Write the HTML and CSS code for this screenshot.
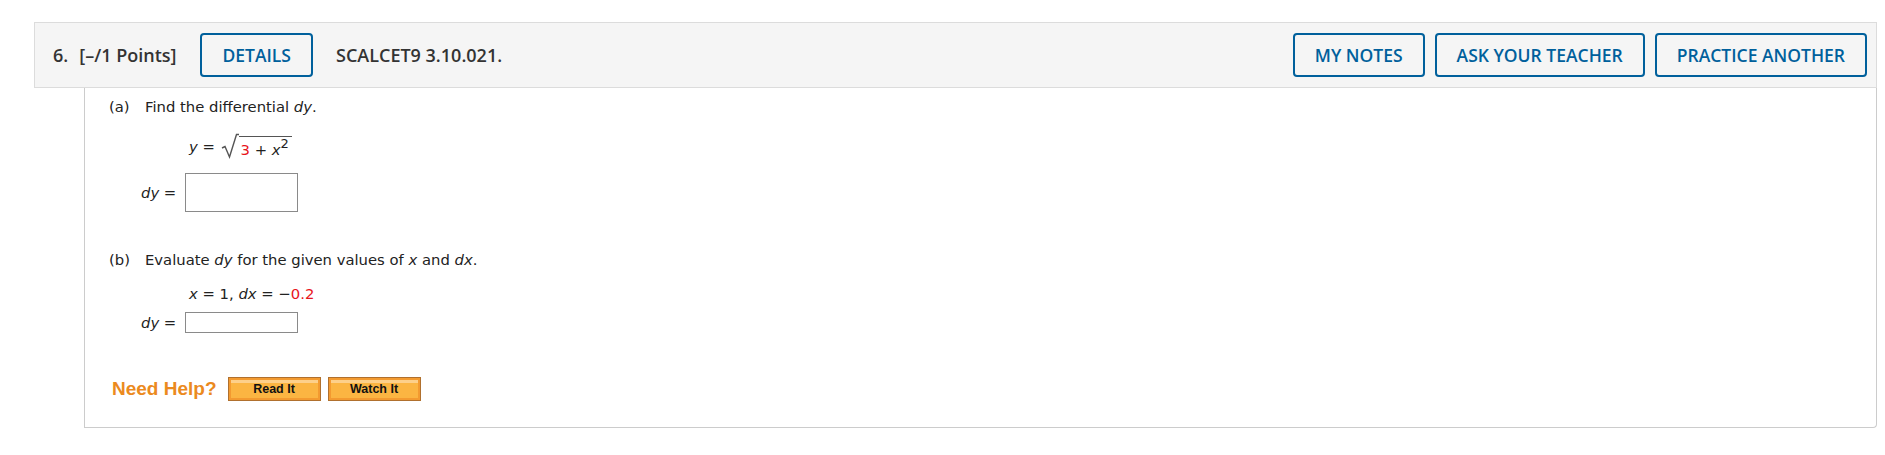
FILE: index.html
```html
<!DOCTYPE html>
<html>
<head>
<meta charset="utf-8">
<link rel="stylesheet" href="styles.css">
</head>
<body>
<div class="question">
  <div class="q-header">
    <div class="q-title">
      <span class="q-num">6.</span>
      <span class="q-points">[–/1 Points]</span>
    </div>
    <button class="hbtn">DETAILS</button>
    <span class="q-code">SCALCET9 3.10.021.</span>
    <div class="spacer"></div>
    <div class="hbtn-group">
      <button class="hbtn">MY NOTES</button>
      <button class="hbtn">ASK YOUR TEACHER</button>
      <button class="hbtn">PRACTICE ANOTHER</button>
    </div>
  </div>
  <div class="q-body">
    <div class="part part-a">
      <div class="prompt"><span class="lbl">(a)</span><span>Find the differential <i>dy</i>.</span></div>
      <div class="eq eq-a">
        <span class="eq-lhs"><i>y</i> =&nbsp;</span><span class="sqrt"><svg class="rad" width="18" height="26" viewBox="0 0 18 26"><path d="M1 15 L4 13.5 L8.5 24 L15.5 1.5 L18 1.5" fill="none" stroke="#555" stroke-width="1.4"/></svg><span class="radicand"><span class="red">3</span> + <i>x</i><sup>2</sup></span></span>
      </div>
      <div class="answer answer-a"><span class="ans-lbl"><i>dy</i> =</span><span class="box box-tall"></span></div>
    </div>
    <div class="part part-b">
      <div class="prompt"><span class="lbl">(b)</span><span>Evaluate <i>dy</i> for the given values of <i>x</i> and <i>dx</i>.</span></div>
      <div class="eq eq-b"><span><i>x</i> = 1, <i>dx</i> = −<span class="red">0.2</span></span></div>
      <div class="answer answer-b"><span class="ans-lbl"><i>dy</i> =</span><span class="box box-short"></span></div>
    </div>
    <div class="help">
      <span class="help-text">Need Help?</span>
      <button class="obtn">Read It</button>
      <button class="obtn">Watch It</button>
    </div>
  </div>
</div>
</body>
</html>
```

FILE: styles.css
```css
html, body {
  margin: 0;
  padding: 0;
  background: #fff;
}
.question {
  padding: 22px 8px 26px 34px;
}
.q-header {
  display: flex;
  align-items: center;
  height: 64px;
  background: #f5f5f5;
  border: 1px solid #dcdcdc;
  padding: 0 9px 0 18px;
  font-family: "Open Sans", sans-serif;
  color: #333;
}
.q-title {
  font-weight: 600;
  font-size: 18px;
  display: flex;
  gap: 11px;
  margin-right: 24px;
}
.q-code {
  font-weight: 600;
  font-size: 18px;
  margin-left: 23px;
  color: #333;
}
.spacer { flex: 1; }
.hbtn-group {
  display: flex;
  gap: 10px;
}
.hbtn {
  font-family: "Open Sans", sans-serif;
  font-size: 17.5px;
  font-weight: 600;
  color: #00609c;
  background: transparent;
  border: 2px solid #00609c;
  border-radius: 4px;
  height: 44px;
  padding: 0 20px;
  margin: 0;
}
.q-body {
  margin-left: 50px;
  border: 1px solid #cccccc;
  border-top: none;
  border-radius: 0 0 4px 0;
  height: 340px;
  box-sizing: border-box;
  padding: 0 0 0 24px;
  font-family: "DejaVu Sans", Verdana, sans-serif;
  font-size: 14.8px;
  color: #222;
}
.prompt {
  display: flex;
  height: 20px;
  align-items: center;
}
.lbl {
  width: 36px;
}
.red { color: #e8141c; }
.part-a { padding-top: 8px; }
.eq {
  padding-left: 80px;
  display: flex;
  align-items: center;
}
.eq-a { margin-top: 17px; height: 26px; }
.sqrt {
  display: inline-flex;
  align-items: flex-end;
}
.rad { display: block; margin-left: 1px; }
.radicand {
  border-top: 1.4px solid #555;
  padding: 3px 3px 0 2px;
  line-height: 19px;
}
.radicand sup {
  font-size: 13px;
  line-height: 0;
  vertical-align: 7px;
}
.answer {
  display: flex;
  align-items: center;
}
.ans-lbl {
  width: 76px;
  padding-left: 32px;
  box-sizing: border-box;
}
.answer-a { margin-top: 14px; }
.box {
  display: block;
  border: 1px solid #8a8a8a;
  background: #fff;
  box-sizing: border-box;
  width: 113px;
}
.box-tall { height: 39px; }
.box-short { height: 21px; }
.part-b { padding-top: 37px; }
.eq-b { margin-top: 14px; height: 20px; }
.answer-b { margin-top: 9px; }
.help {
  display: flex;
  align-items: center;
  margin-top: 44px;
  padding-left: 3px;
}
.help-text {
  font-family: "Liberation Sans", Arial, sans-serif;
  font-weight: bold;
  font-size: 19px;
  color: #eb8a1e;
  margin-right: 11px;
}
.obtn {
  font-family: "Liberation Sans", Arial, sans-serif;
  font-weight: bold;
  font-size: 12.5px;
  color: #111;
  width: 93px;
  height: 24px;
  margin: 0 7px 0 0;
  padding: 0;
  border: 1px solid #b0702e;
  background: #fbb542;
  box-shadow: inset 0 0 0 2px #f39a30, inset 0 3px 0 2px #fdd08a;
}
```
